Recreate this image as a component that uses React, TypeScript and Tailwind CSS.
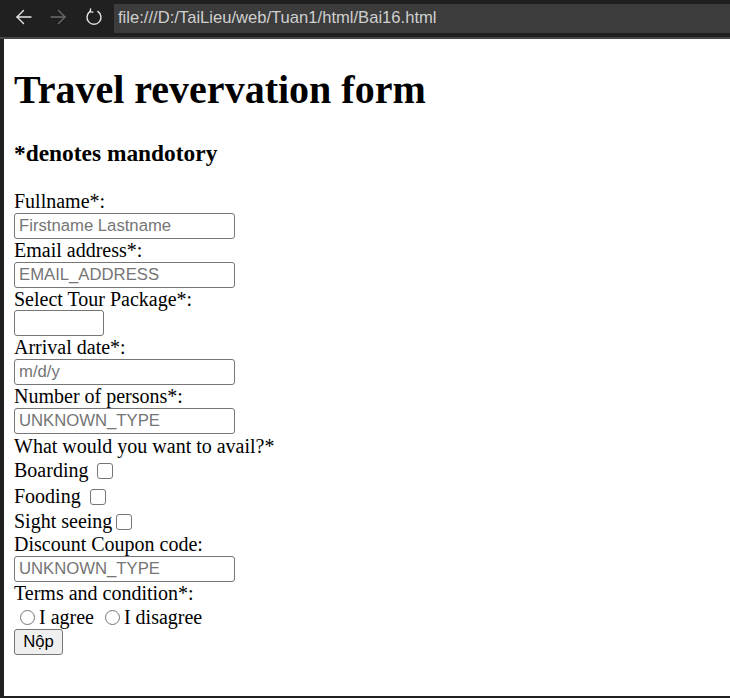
import React from 'react';

const inputCls =
  'block w-[221px] h-[26px] border border-[#767676] rounded-[3px] bg-white px-[4px] text-[16.7px] text-black placeholder:text-[#757575] outline-none [font-family:"Liberation_Sans",Arial,sans-serif]';

const boxCls =
  'inline-block appearance-none w-[16px] h-[16px] border border-[#767676] rounded-[3px] bg-white align-[-2px] ml-[4px] mr-[4px] m-0';

const radioCls =
  'inline-block appearance-none w-[15px] h-[15px] border border-[#767676] rounded-full bg-white align-[-1px] ml-[6px] mr-[4px]';

const Label = ({ children }: { children: React.ReactNode }) => (
  <div className="leading-[22.75px]">{children}</div>
);

const ReloadIcon = () => (
  <svg width="18" height="18" viewBox="0 0 18 18" fill="none" stroke="#e6e6e6" strokeWidth="1.4" strokeLinecap="round">
    <path d="M5.2 3.4 A7 7 0 1 0 12.8 3.4" />
    <path d="M5.6 1 L5.2 3.6 L7.8 4.1" />
  </svg>
);

const ArrowIcon = ({ dir, color }: { dir: 'left' | 'right'; color: string }) => (
  <svg width="18" height="18" viewBox="0 0 18 18" fill="none" stroke={color} strokeWidth="1.4" strokeLinecap="round" strokeLinejoin="round">
    {dir === 'left' ? (
      <>
        <path d="M16 9 H2" />
        <path d="M8.5 2.5 L2 9 L8.5 15.5" />
      </>
    ) : (
      <>
        <path d="M2 9 H16" />
        <path d="M9.5 2.5 L16 9 L9.5 15.5" />
      </>
    )}
  </svg>
);

const App = () => {
  return (
    <div className="w-[730px] h-[698px] flex flex-col bg-[#202020] overflow-hidden">
      {/* browser bar */}
      <div className="h-[37px] flex items-start shrink-0">
        <div className="flex items-center h-[30px] pt-[3px] pl-[15px] gap-[16px] w-[114px]">
          <ArrowIcon dir="left" color="#e6e6e6" />
          <ArrowIcon dir="right" color="#6b6b6b" />
          <span className="ml-[2px] flex">
            <ReloadIcon />
          </span>
        </div>
        <div className="mt-[4px] h-[29px] flex-1 bg-[#3c3c3c] flex items-center pl-[4px] text-[16.6px] text-[#cfcfcf] [font-family:'Liberation_Sans',Arial,sans-serif]">
          file:///D:/TaiLieu/web/Tuan1/html/Bai16.html
        </div>
      </div>
      <div className="h-[2px] bg-[#474747] shrink-0" />

      <div className="flex-1 flex min-h-0">
        <div className="w-[4px] bg-[#202020] shrink-0" />
        <div className="flex-1 bg-white px-[10px] text-black text-[20px] [font-family:'Liberation_Serif','Times_New_Roman',serif]">
          <h1 className="mt-[28px] mb-[27px] text-[40px] leading-[46px] font-bold">Travel revervation form</h1>
          <h3 className="text-[23.4px] leading-[27px] font-bold mb-[23px]">*denotes mandotory</h3>

          <form>
            <Label>Fullname*:</Label>
            <input className={inputCls} placeholder="Firstname Lastname" />
            <Label>Email address*:</Label>
            <input className={inputCls} placeholder="EMAIL_ADDRESS" />
            <Label>Select Tour Package*:</Label>
            <select className="block w-[90px] h-[26px] border border-[#767676] rounded-[3px] bg-white appearance-none" />
            <Label>Arrival date*:</Label>
            <input className={inputCls} placeholder="m/d/y" />
            <Label>Number of persons*:</Label>
            <input className={inputCls} placeholder="UNKNOWN_TYPE" />
            <div className="leading-[23px] pt-[1px]">What would you want to avail?*</div>
            <div className="h-[25px] pt-[1px] leading-[23px]">
              Boarding <input type="checkbox" className={boxCls} />
            </div>
            <div className="h-[25px] pt-[2px] leading-[23px]">
              Fooding <input type="checkbox" className={boxCls} />
            </div>
            <div className="h-[25px] pt-[2px] leading-[23px]">
              Sight seeing<input type="checkbox" className={boxCls} />
            </div>
            <Label>Discount Coupon code:</Label>
            <input className={inputCls} placeholder="UNKNOWN_TYPE" />
            <Label>Terms and condition*:</Label>
            <div className="h-[25px] pt-[2px] leading-[23px]">
              <input type="radio" name="t" className={radioCls} />I agree{' '}
              <input type="radio" name="t" className={radioCls} />I disagree
            </div>
            <button
              type="button"
              className="block w-[49px] h-[26px] border border-[#767676] rounded-[3px] bg-[#efefef] text-[16.7px] text-black leading-none [font-family:'Liberation_Sans',Arial,sans-serif]"
            >
              Nộp
            </button>
          </form>
        </div>
      </div>
      <div className="h-[2px] bg-[#202020] shrink-0" />
    </div>
  );
};

export default App;
